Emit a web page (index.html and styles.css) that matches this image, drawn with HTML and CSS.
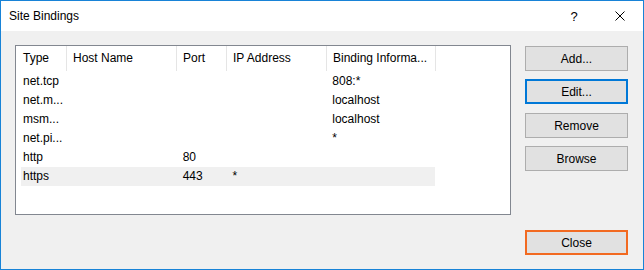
FILE: index.html
```html
<!DOCTYPE html>
<html lang="en">
<head>
    <meta charset="UTF-8">
    <title>Site Bindings</title>
    <link rel="stylesheet" href="styles.css">
</head>
<body>
    <div class="window">
        <div class="titlebar">
            <span class="title">Site Bindings</span>
            <span class="help">?</span>
            <span class="close-x">
                <svg width="10" height="10" viewBox="0 0 10 10">
                    <path d="M0.5 0.5 L9.5 9.5 M9.5 0.5 L0.5 9.5" stroke="#000" stroke-width="1" fill="none"/>
                </svg>
            </span>
        </div>

        <div class="dialog-body">
            <div class="list">
                <div class="list-head">
                    <div class="col c1">Type</div>
                    <div class="col c2">Host Name</div>
                    <div class="col c3">Port</div>
                    <div class="col c4">IP Address</div>
                    <div class="col c5">Binding Informa...</div>
                </div>
                <div class="row">
                    <div class="cell c1">net.tcp</div>
                    <div class="cell c2"></div>
                    <div class="cell c3"></div>
                    <div class="cell c4"></div>
                    <div class="cell c5">808:*</div>
                </div>
                <div class="row">
                    <div class="cell c1">net.m...</div>
                    <div class="cell c2"></div>
                    <div class="cell c3"></div>
                    <div class="cell c4"></div>
                    <div class="cell c5">localhost</div>
                </div>
                <div class="row">
                    <div class="cell c1">msm...</div>
                    <div class="cell c2"></div>
                    <div class="cell c3"></div>
                    <div class="cell c4"></div>
                    <div class="cell c5">localhost</div>
                </div>
                <div class="row">
                    <div class="cell c1">net.pi...</div>
                    <div class="cell c2"></div>
                    <div class="cell c3"></div>
                    <div class="cell c4"></div>
                    <div class="cell c5">*</div>
                </div>
                <div class="row">
                    <div class="cell c1">http</div>
                    <div class="cell c2"></div>
                    <div class="cell c3">80</div>
                    <div class="cell c4"></div>
                    <div class="cell c5"></div>
                </div>
                <div class="row selected">
                    <div class="cell c1">https</div>
                    <div class="cell c2"></div>
                    <div class="cell c3">443</div>
                    <div class="cell c4">*</div>
                    <div class="cell c5"></div>
                </div>
            </div>

            <div class="side">
                <button class="btn">Add...</button>
                <button class="btn focused">Edit...</button>
                <button class="btn">Remove</button>
                <button class="btn">Browse</button>
                <button class="btn default">Close</button>
            </div>
        </div>
    </div>
</body>
</html>
```

FILE: styles.css
```css
html, body {
    margin: 0;
    padding: 0;
}

body {
    font-family: "Liberation Sans", Arial, sans-serif;
    font-size: 12px;
    color: #000;
}

.window {
    width: 642px;
    height: 268px;
    border: 1px solid #1883d7;
    background-color: #f0f0f0;
    display: flex;
    flex-direction: column;
}

.titlebar {
    height: 30px;
    background-color: #fff;
    display: flex;
    align-items: center;
}

.title {
    margin-left: 8px;
    flex: 1;
}

.help {
    width: 46px;
    text-align: center;
    font-size: 13px;
}

.close-x {
    width: 46px;
    height: 30px;
    display: flex;
    align-items: center;
    justify-content: center;
}

.dialog-body {
    flex: 1;
    display: flex;
    padding: 14px 15px 14px 14px;
    gap: 14px;
}

/* list view */
.list {
    width: 494px;
    height: 168px;
    border: 1px solid #828790;
    background-color: #fff;
}

.list-head {
    display: flex;
    height: 26px;
}

.list-head .col {
    box-sizing: border-box;
    height: 25px;
    border-right: 1px solid #e5e5e5;
    padding-left: 6px;
    line-height: 25px;
    white-space: nowrap;
}

.list-head .c1 { width: 51px; padding-left: 7px; }

.c2 { width: 110px; }
.c3 { width: 50px; }
.c4 { width: 100px; }
.c5 { width: 109px; }

.row {
    display: flex;
    height: 19px;
    margin-left: 5px;
    width: 414px;
}

.row.selected {
    background-color: #f0f0f0;
}

.cell {
    box-sizing: border-box;
    padding-left: 6px;
    line-height: 19px;
    white-space: nowrap;
}

.row .c1 { width: 46px; padding-left: 2px; }

/* buttons */
.side {
    display: flex;
    flex-direction: column;
    gap: 8px;
    padding-top: 1px;
}

.btn {
    width: 103px;
    height: 25px;
    box-sizing: border-box;
    background-color: #e1e1e1;
    border: 1px solid #adadad;
    font-family: inherit;
    font-size: 12px;
    color: #000;
    padding: 0;
}

.btn.focused {
    border: 2px solid #0078d7;
    margin-bottom: 1px;
}

.btn.default {
    margin-top: auto;
    border: 2px solid #f26a21;
}
```
